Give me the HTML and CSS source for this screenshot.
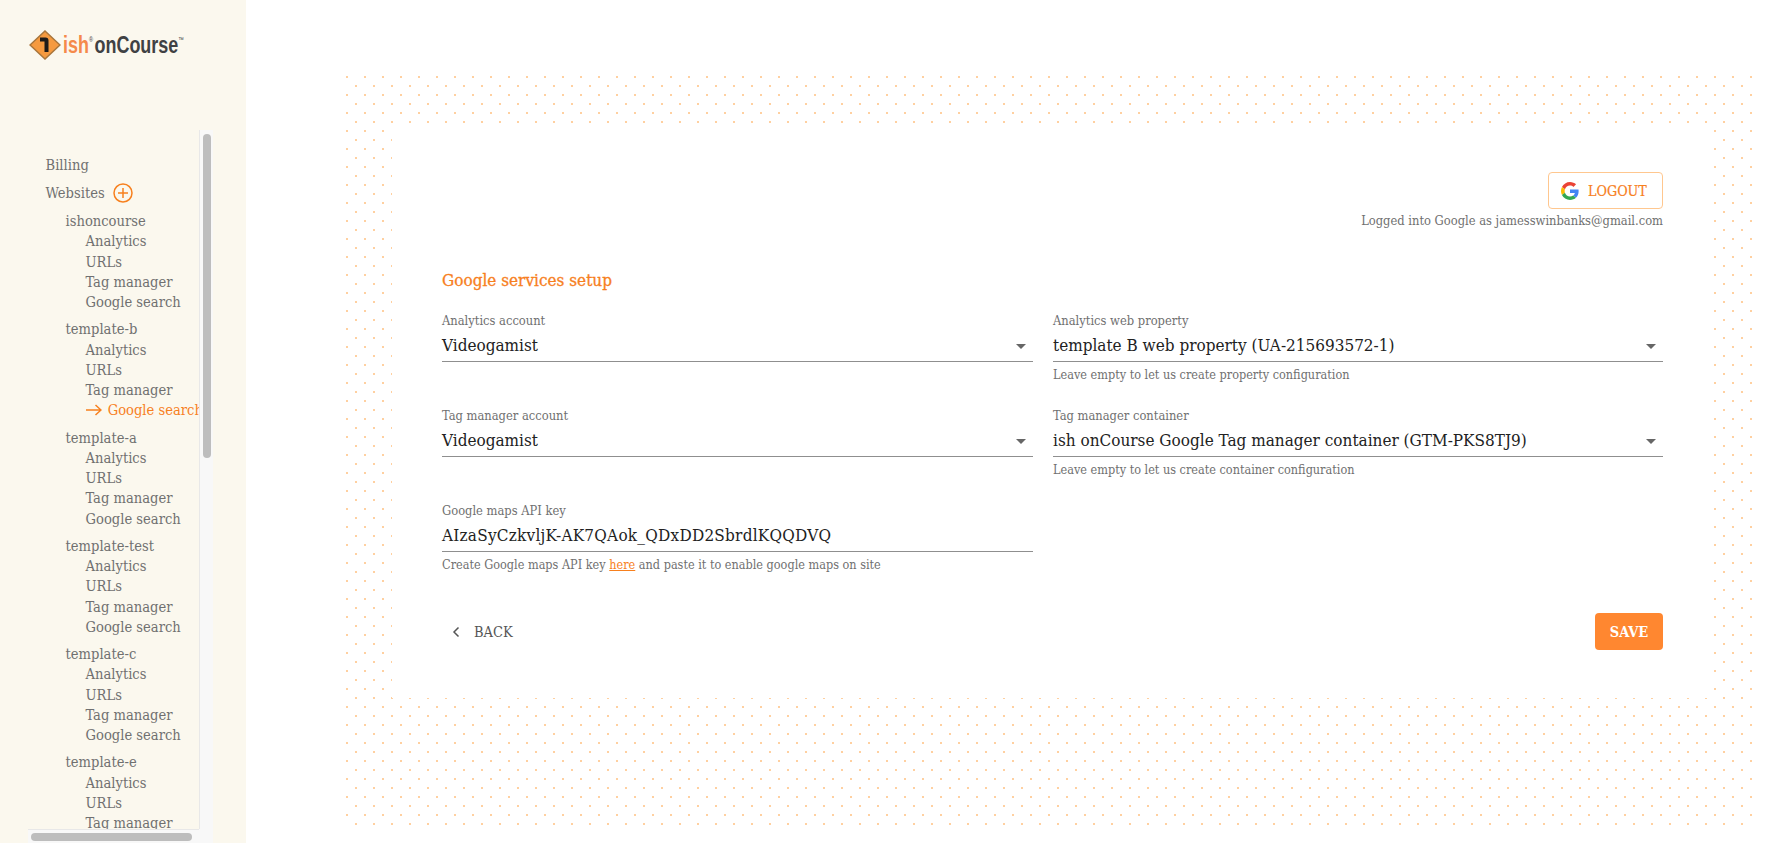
FILE: index.html
```html
<!DOCTYPE html>
<html lang="en">
<head>
    <meta charset="UTF-8">
    <meta name="viewport" content="width=device-width, initial-scale=1.0">
    <title>Google services setup</title>
    <link rel="stylesheet" href="styles.css">
</head>
<body>
    <aside class="sidebar">
        <div class="logo">
            <svg class="logo-mark" width="32" height="30" viewBox="0 0 32 30">
                <polygon points="16,1 31,15 16,29 1,15" fill="#f59a3f" stroke="#a8763c" stroke-width="1.5"/>
                <path d="M11 7.5h5.5q3 0 3 3V22h-4V11.500h-4.500z" fill="#1d1b19"/>
            </svg>
            <span class="logo-text">
                <span class="logo-ish">ish<sup>®</sup></span>
                <span class="logo-name">onCourse<sup>™</sup></span>
            </span>
        </div>
        <div class="menu">
            <nav class="menu-view">
                <div class="menu-inner">
                    <a class="menu-top">Billing</a>
                    <a class="menu-top">Websites
                        <svg class="plus" width="20" height="20" viewBox="0 0 20 20">
                            <circle cx="10" cy="10" r="9" fill="none" stroke="#f7801e" stroke-width="1.500"/>
                            <path d="M10 5v10M5 10h10" stroke="#f7801e" stroke-width="1.500"/>
                        </svg>
                    </a>
                    <ul class="site">
                        <li class="site-name">ishoncourse</li>
                        <li>Analytics</li><li>URLs</li><li>Tag manager</li><li>Google search</li>
                    </ul>
                    <ul class="site">
                        <li class="site-name">template-b</li>
                        <li>Analytics</li><li>URLs</li><li>Tag manager</li>
                        <li class="active">
                            <svg width="16" height="12" viewBox="0 0 16 12"><path d="M0 6h15M9.500 1l5.500 5-5.500 5" fill="none" stroke="#f7801e" stroke-width="1.500"/></svg>
                            Google search
                        </li>
                    </ul>
                    <ul class="site">
                        <li class="site-name">template-a</li>
                        <li>Analytics</li><li>URLs</li><li>Tag manager</li><li>Google search</li>
                    </ul>
                    <ul class="site">
                        <li class="site-name">template-test</li>
                        <li>Analytics</li><li>URLs</li><li>Tag manager</li><li>Google search</li>
                    </ul>
                    <ul class="site">
                        <li class="site-name">template-c</li>
                        <li>Analytics</li><li>URLs</li><li>Tag manager</li><li>Google search</li>
                    </ul>
                    <ul class="site">
                        <li class="site-name">template-e</li>
                        <li>Analytics</li><li>URLs</li><li>Tag manager</li>
                    </ul>
                </div>
            </nav>
            <div class="bar bar-v"><div class="thumb thumb-v"></div></div>
            <div class="bar bar-h"><div class="thumb thumb-h"></div></div>
            <div class="bar-corner"></div>
        </div>
    </aside>

    <main class="main">
        <div class="dots">
            <section class="card">
                <div class="account">
                    <button class="logout">
                        <svg width="18" height="18" viewBox="0 0 48 48">
                            <path fill="#EA4335" d="M24 9.500c3.540 0 6.710 1.220 9.210 3.600l6.850-6.850C35.900 2.380 30.470 0 24 0 14.620 0 6.510 5.380 2.560 13.220l7.980 6.190C12.430 13.720 17.740 9.500 24 9.500z"/>
                            <path fill="#4285F4" d="M46.980 24.550c0-1.570-.15-3.090-.38-4.550H24v9.020h12.940c-.58 2.960-2.260 5.480-4.780 7.180l7.730 6c4.510-4.180 7.090-10.360 7.090-17.650z"/>
                            <path fill="#FBBC05" d="M10.530 28.590c-.48-1.450-.76-2.990-.76-4.590s.27-3.140.76-4.590l-7.980-6.190C.92 16.460 0 20.120 0 24c0 3.880.92 7.540 2.560 10.780l7.970-6.190z"/>
                            <path fill="#34A853" d="M24 48c6.480 0 11.930-2.130 15.890-5.810l-7.730-6c-2.150 1.450-4.920 2.300-8.160 2.300-6.260 0-11.570-4.220-13.470-9.910l-7.980 6.190C6.510 42.620 14.620 48 24 48z"/>
                        </svg>
                        LOGOUT
                    </button>
                    <p class="logged">Logged into Google as jamesswinbanks@gmail.com</p>
                </div>

                <h2 class="title">Google services setup</h2>

                <div class="fields">
                    <div class="field">
                        <label class="field-label">Analytics account</label>
                        <div class="field-value select">Videogamist</div>
                    </div>
                    <div class="field">
                        <label class="field-label">Analytics web property</label>
                        <div class="field-value select">template B web property (UA-215693572-1)</div>
                        <p class="hint">Leave empty to let us create property configuration</p>
                    </div>
                    <div class="field">
                        <label class="field-label">Tag manager account</label>
                        <div class="field-value select">Videogamist</div>
                    </div>
                    <div class="field">
                        <label class="field-label">Tag manager container</label>
                        <div class="field-value select">ish onCourse Google Tag manager container (GTM-PKS8TJ9)</div>
                        <p class="hint">Leave empty to let us create container configuration</p>
                    </div>
                    <div class="field">
                        <label class="field-label">Google maps API key</label>
                        <div class="field-value api-key">AIzaSyCzkvljK-AK7QAok_QDxDD2SbrdlKQQDVQ</div>
                        <p class="hint">Create Google maps API key <a class="link">here</a> and paste it to enable google maps on site</p>
                    </div>
                </div>

                <div class="actions">
                    <button class="back">
                        <svg width="8" height="12" viewBox="0 0 8 12"><path d="M6.500 1.500L2 6l4.500 4.500" fill="none" stroke="#555" stroke-width="1.500"/></svg>
                        BACK
                    </button>
                    <button class="save">SAVE</button>
                </div>
            </section>
        </div>
    </main>
</body>
</html>
```

FILE: styles.css
```css
* {
    box-sizing: border-box;
}
html, body {
    height: 100%;
}
body {
    margin: 0;
    display: flex;
    overflow: hidden;
    background-color: #fff;
    font-family: "DejaVu Serif Condensed", "DejaVu Serif", serif;
    color: #707070;
}
button {
    font-family: inherit;
    cursor: pointer;
}

/* sidebar */
.sidebar {
    width: 246px;
    flex-shrink: 0;
    height: 843px;
    display: flex;
    flex-direction: column;
    background-color: #fbf8ee;
}
.logo {
    display: flex;
    align-items: center;
    height: 30px;
    margin: 30px 0 70px 29px;
}
.logo-text {
    display: flex;
    gap: 2px;
    margin-left: 2px;
    white-space: nowrap;
    transform: scaleX(0.78);
    transform-origin: left center;
    font-family: "Liberation Sans", sans-serif;
    font-weight: 700;
    font-size: 23px;
    line-height: 30px;
}
.logo sup {
    font-size: 7px;
    font-weight: 400;
    vertical-align: 11px;
    line-height: 0;
    color: #3f4143;
}
.logo-ish {
    color: #f58a4b;
}
.logo-name {
    color: #3f4143;
}
.menu {
    display: grid;
    grid-template-columns: 171px 14px;
    grid-template-rows: 699px 14px;
    margin-left: 28px;
}
.menu-view {
    overflow: hidden;
}
.menu-inner {
    width: 190px;
    padding: 25px 0 0 17.500px;
    font-size: 14.6px;
    line-height: 20.25px;
    white-space: nowrap;
}
.bar, .bar-corner {
    background-color: #f8f8f8;
}
.bar-v {
    padding: 4px 2px 0 3px;
    border-left: 1px solid #e8e8e8;
}
.bar-h {
    padding: 3px 0 0 3px;
    border-top: 1px solid #e8e8e8;
}
.thumb {
    background-color: #bdbdbd;
    border-radius: 4px;
}
.thumb-v {
    width: 8px;
    height: 324px;
}
.thumb-h {
    width: 161px;
    height: 8px;
}
.menu-top {
    display: flex;
    align-items: center;
    gap: 8px;
    height: 28px;
    margin-top: -4px;
}
.menu-top + .menu-top {
    margin-top: 0;
    margin-bottom: 4px;
}
.plus {
    flex-shrink: 0;
}
.site {
    list-style: none;
    margin: 0 0 7px;
    padding: 0 0 0 40px;
}
.site-name {
    margin-left: -20px;
}
.active {
    color: #f7801e;
}
.active svg {
    margin-right: 2px;
    vertical-align: -1px;
}

/* main area */
.main {
    flex: 1;
    min-width: 0;
    padding: 76px 21px 0 100px;
}
.dots {
    height: 749px;
    padding: 50px 42px 0 46px;
    background-image:
        radial-gradient(circle at 1px 1px, #ffd0a0 1px, transparent 1.2px),
        radial-gradient(circle at 10px 10px, #ffd0a0 1px, transparent 1.2px);
    background-size: 18px 18px;
}
.card {
    height: 572px;
    padding: 46px 49px 0 50px;
    background-color: #fff;
}
.account {
    display: flex;
    flex-direction: column;
    align-items: flex-end;
}
.logout {
    display: flex;
    align-items: center;
    gap: 9px;
    width: 115px;
    height: 37px;
    padding: 0 0 0 12px;
    border: 1px solid #ffc78f;
    border-radius: 4px;
    background-color: #fff;
    color: #f7801e;
    font-size: 14.2px;
    -webkit-text-stroke: 0.2px #f7801e;
}
.logged {
    margin: 3px 0 0;
    font-size: 12.8px;
    line-height: 18px;
}
.title {
    margin: 38px 0 21px;
    font-size: 17px;
    line-height: 24px;
    font-weight: 400;
    color: #f7801e;
    -webkit-text-stroke: 0.3px #f7801e;
}
.fields {
    display: grid;
    grid-template-columns: 591px 610px;
    column-gap: 20px;
    row-gap: 25px;
}
.field {
    min-height: 70px;
}
.field-label {
    display: block;
    font-size: 12.8px;
    line-height: 16px;
}
.field-value {
    position: relative;
    padding: 4px 0;
    border-bottom: 1px solid #8f8f8f;
    font-size: 17px;
    line-height: 24px;
    color: #222;
}
.api-key {
    letter-spacing: 0.24px;
}
.select::after {
    content: "";
    position: absolute;
    right: 7px;
    top: 15px;
    border-style: solid;
    border-width: 5px 5px 0;
    border-color: #666 transparent transparent;
}
.hint {
    margin: 5px 0 0;
    font-size: 12.55px;
    line-height: 16px;
}
.link {
    color: #f7801e;
    text-decoration: underline;
}
.actions {
    display: flex;
    align-items: center;
    justify-content: space-between;
    margin-top: 40px;
}
.back {
    display: flex;
    align-items: center;
    gap: 14px;
    height: 37px;
    padding: 0 0 0 10px;
    border: none;
    background: none;
    color: #555;
    font-size: 14.5px;
}
.save {
    width: 68px;
    height: 37px;
    border: none;
    border-radius: 4px;
    background-color: #ff8730;
    color: #fff;
    font-size: 14.500px;
    font-weight: 700;
}
```
